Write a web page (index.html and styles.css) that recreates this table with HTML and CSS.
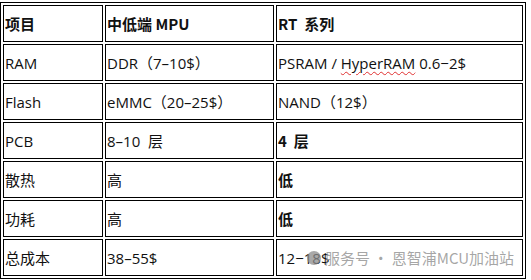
FILE: index.html
```html
<!DOCTYPE html>
<html lang="zh-CN">
<head>
<meta charset="utf-8">
<link rel="stylesheet" href="styles.css">
</head>
<body>
<table class="cmp">
  <tr class="head">
    <td class="c1">项目</td>
    <td class="c2">中低端 MPU</td>
    <td class="c3">RT&nbsp; 系列</td>
  </tr>
  <tr>
    <td>RAM</td>
    <td>DDR（7–10$）</td>
    <td>PSRAM / <span class="spell">HyperRAM</span> 0.6−2$</td>
  </tr>
  <tr>
    <td>Flash</td>
    <td>eMMC（20–25$）</td>
    <td>NAND（12$）</td>
  </tr>
  <tr>
    <td>PCB</td>
    <td>8–10&nbsp; 层</td>
    <td class="b">4&nbsp; 层</td>
  </tr>
  <tr>
    <td>散热</td>
    <td>高</td>
    <td class="b">低</td>
  </tr>
  <tr>
    <td>功耗</td>
    <td>高</td>
    <td class="b">低</td>
  </tr>
  <tr>
    <td>总成本</td>
    <td>38–55$</td>
    <td class="last">12−18$<span class="wm"><span class="wm-icon"></span>服务号 · 恩智浦MCU加油站</span></td>
  </tr>
</table>
</body>
</html>
```
FILE: styles.css
```css
html, body {
  margin: 0;
  padding: 0;
  background: #ffffff;
}
body {
  padding-top: 2px;
  font-family: "Open Sans", "Noto Sans CJK SC", sans-serif;
  font-size: 15px;
  color: #111;
}
.cmp {
  border: 1px solid #000;
  border-collapse: separate;
  border-spacing: 2px;
  width: 526px;
  table-layout: fixed;
}
.cmp td {
  border: 1px solid #000;
  padding: 0 0 0 1px;
  vertical-align: middle;
  white-space: nowrap;
  line-height: 20px;
  box-sizing: border-box;
  height: 37px;
}
.cmp .c1 { width: 100px; }
.cmp .c2 { width: 169px; }
.cmp .c3 { width: 247px; }
.head td, .cmp td.b {
  font-weight: 700;
  font-family: "Noto Sans CJK SC", sans-serif;
}
.spell {
  text-decoration: underline wavy #e03030;
  text-decoration-thickness: 1px;
  text-underline-offset: 2px;
}
.last {
  position: relative;
}
.wm {
  position: absolute;
  left: 30px;
  top: 8px;
  color: rgba(150, 150, 150, 0.85);
  font-family: "Noto Sans CJK SC", sans-serif;
  font-size: 15px;
  display: flex;
  align-items: center;
  gap: 4px;
}
.wm-icon {
  width: 14px;
  height: 14px;
  border-radius: 50%;
  background: rgba(140, 140, 140, 0.75);
}
```
